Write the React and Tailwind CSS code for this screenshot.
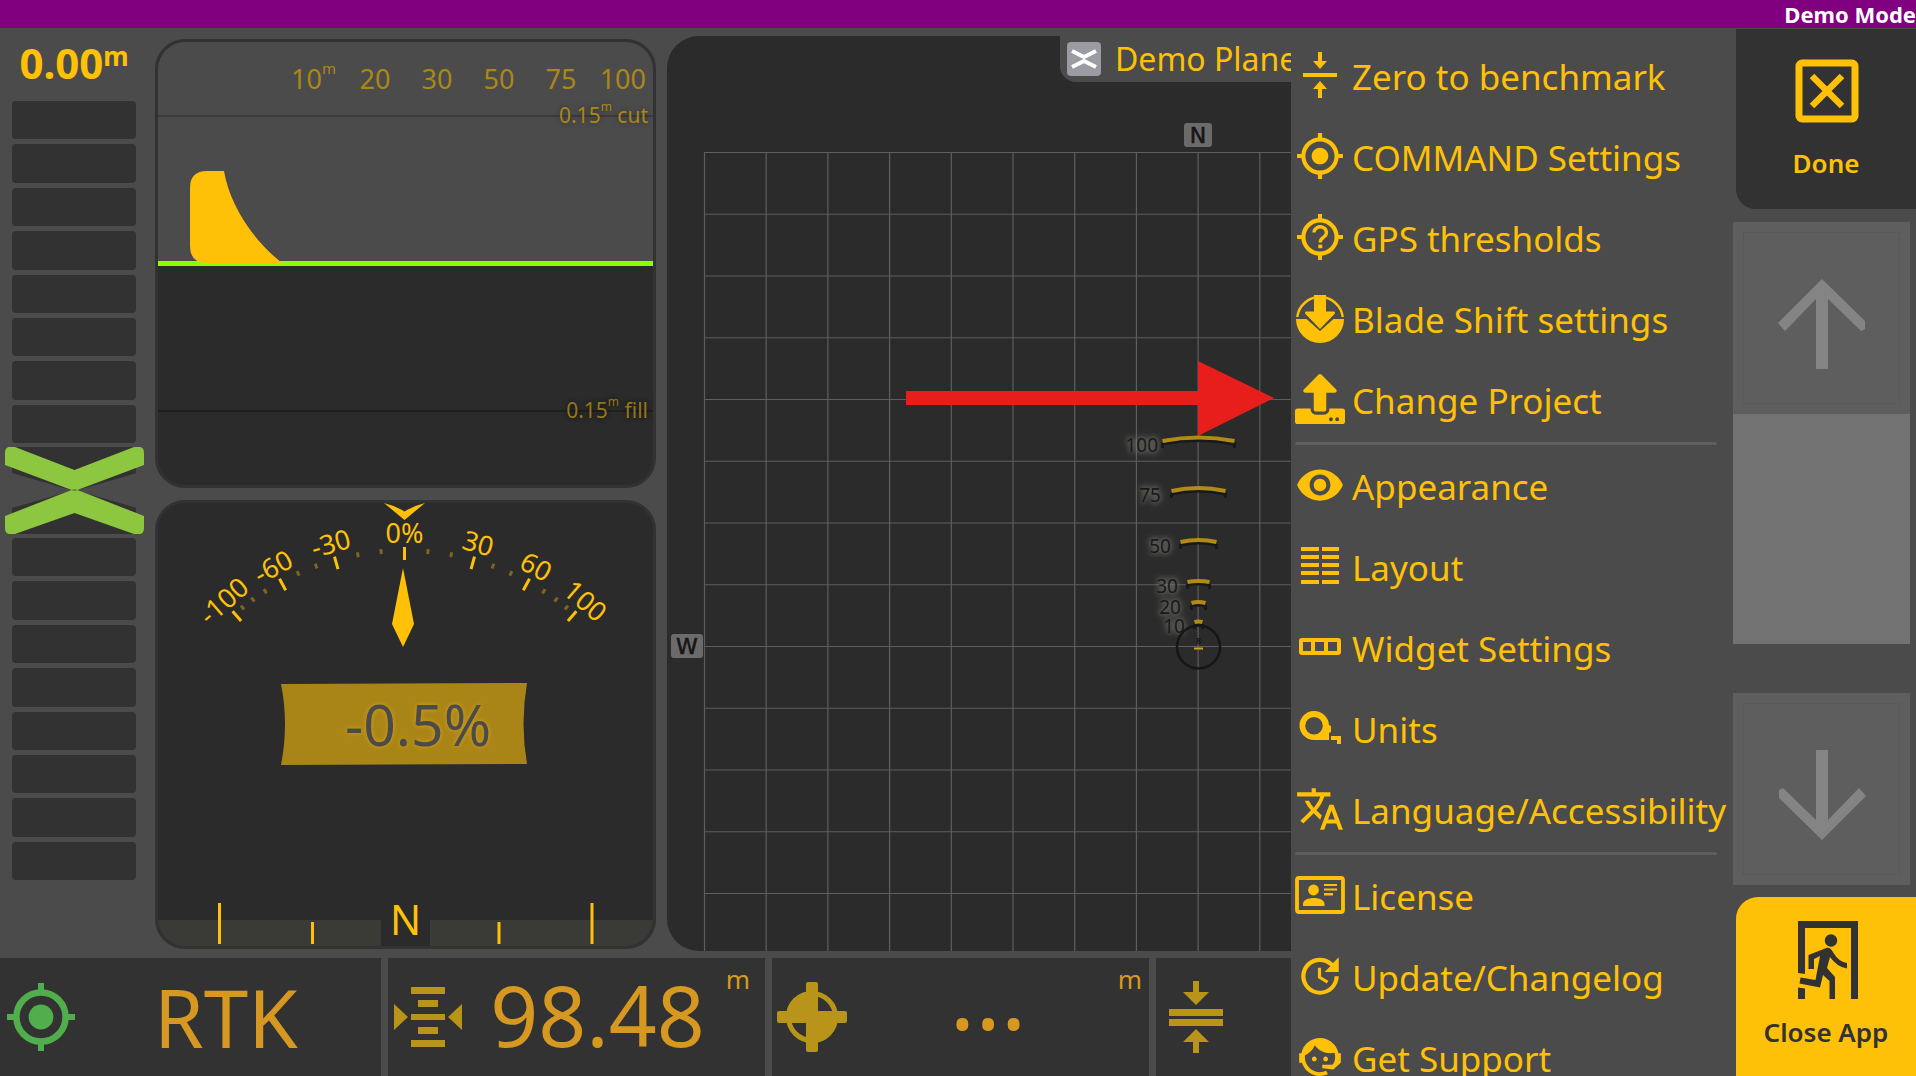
import React from "react";
import { MdGpsFixed, MdVisibility, MdTranslate, MdUpdate } from "react-icons/md";
import { FaUpload } from "react-icons/fa";

const Svg = ({ children, className = "size-[50px]", box = "0 0 50 50" }) => (
  <svg viewBox={box} className={className} fill="currentColor" aria-hidden="true">
    {children}
  </svg>
);

const ZeroIcon = ({ className }) => (
  <Svg className={className}>
    <path d="M23 2h4v9h5l-7 8-7-8h5zM8 23h34v4H8zM25 31l7 8h-5v9h-4v-9h-5z" />
  </Svg>
);

const GpsQuestionIcon = ({ className }) => (
  <Svg className={className}>
    <circle cx="25" cy="25" r="16.6" fill="none" stroke="currentColor" strokeWidth="4.2" />
    <path d="M23 2h4v6h-4zM23 42h4v6h-4zM2 23h6v4H2zM42 23h6v4h-6z" />
    <path
      d="M19 20.5a6.2 5.6 0 1 1 9.6 4.6C26.4 26.6 25.2 27.6 25.2 30.5"
      fill="none"
      stroke="currentColor"
      strokeWidth="3.4"
    />
    <rect x="23.3" y="32.6" width="4" height="3.6" />
  </Svg>
);

const BladeShiftIcon = ({ className }) => (
  <Svg className={className}>
    <path d="M2.2 24a23 23 0 0 1 45.6 0" fill="none" stroke="currentColor" strokeWidth="2.4" />
    <path d="M1 26h10.5L25 38l13.5-12H49a24 24 0 0 1-48 0z" />
    <path d="M19 2h12v16.5h7.5q2.5.5 1 2.5L25 36 10.5 21q-1.5-2 1-2.5H19z" />
  </Svg>
);

const LayoutIcon = ({ className }) => (
  <Svg className={className}>
    {[6, 14, 22, 30, 39].map((y) => (
      <path key={y} d={`M6 ${y}h18v4H6zM27 ${y}h17v4H27z`} />
    ))}
  </Svg>
);

const WidgetIcon = ({ className }) => (
  <Svg className={className}>
    <path
      fillRule="evenodd"
      d="M7 16h36a3 3 0 0 1 3 3v11a3 3 0 0 1-3 3H7a3 3 0 0 1-3-3V19a3 3 0 0 1 3-3zM8 20v9h8v-9zM20 20v9h9v-9zM33 20v9h9v-9z"
    />
  </Svg>
);

const TapeIcon = ({ className }) => (
  <Svg className={className}>
    <path
      fillRule="evenodd"
      d="M19 8a15 15 0 0 1 15 14l2 1v6l-2 1v7H19A14.5 14.5 0 0 1 19 8zM19 14a8.8 8.8 0 1 0 0 17.6A8.8 8.8 0 0 0 19 14z"
    />
    <path d="M36 33h10v8h-4v-4h-6z" />
  </Svg>
);

const LicenseIcon = ({ className }) => (
  <Svg className={className}>
    <rect x="2" y="8" width="46" height="34" rx="2" fill="none" stroke="currentColor" strokeWidth="3.8" />
    <circle cx="18.5" cy="20" r="5.4" />
    <path d="M8 36v-2c0-8 21.5-8 21.5 0v2zM29 14h13v2H29zM29 18.5h13v2H29zM29 23h9v2.5h-9z" />
  </Svg>
);

const SupportIcon = ({ className }) => (
  <Svg className={className} box="0 0 24 24">
    <path d="M18.72 14.76C19.07 13.91 19.26 13 19.26 12C19.26 11.28 19.15 10.59 18.96 9.95C18.31 10.1 17.63 10.18 16.92 10.18C13.86 10.18 11.15 8.67 9.5 6.34C8.61 8.5 6.91 10.26 4.77 11.22C4.73 11.47 4.73 11.74 4.73 12A7.27 7.27 0 0 0 12 19.27C13.05 19.27 14.06 19.04 14.97 18.63C15.54 19.72 15.8 20.26 15.78 20.26C14.14 20.81 12.87 21.08 12 21.08C9.58 21.08 7.27 20.13 5.57 18.42C4.53 17.38 3.76 16.11 3.33 14.73H2V10.18H3.09C3.93 6.04 7.6 2.92 12 2.92C14.4 2.92 16.71 3.87 18.42 5.58C19.69 6.84 20.54 8.45 20.89 10.18H22V14.73H21.94L18.38 18L13.08 17.4V15.73H17.91L18.72 14.76M9.27 11.77C9.9 11.77 10.4 12.28 10.4 12.91C10.4 13.54 9.9 14.04 9.27 14.04C8.64 14.04 8.13 13.54 8.13 12.91C8.13 12.28 8.64 11.77 9.27 11.77M14.72 11.77C15.35 11.77 15.85 12.28 15.85 12.91C15.85 13.54 15.35 14.04 14.72 14.04C14.09 14.04 13.58 13.54 13.58 12.91A1.14 1.14 0 0 1 14.72 11.77Z" />
  </Svg>
);

const MENU = [
  [
    ["Zero to benchmark", ZeroIcon],
    ["COMMAND Settings", MdGpsFixed],
    ["GPS thresholds", GpsQuestionIcon],
    ["Blade Shift settings", BladeShiftIcon],
    ["Change Project", FaUpload],
  ],
  [
    ["Appearance", MdVisibility],
    ["Layout", LayoutIcon],
    ["Widget Settings", WidgetIcon],
    ["Units", TapeIcon],
    ["Language/Accessibility", MdTranslate],
  ],
  [
    ["License", LicenseIcon],
    ["Update/Changelog", MdUpdate],
    ["Get Support", SupportIcon],
  ],
];

function SettingsMenu() {
  return (
    <nav className="w-[442px] shrink-0 overflow-hidden bg-[#4b4b4b] pt-2 pl-1">
      {MENU.map((section, i) => (
        <React.Fragment key={i}>
          {i > 0 && <hr className="my-px mr-4 h-[3px] rounded-full border-0 bg-[#5f5f5d]" />}
          <ul>
            {section.map(([label, Icon]) => (
              <li key={label}>
                <button
                  type="button"
                  className="flex h-[81px] w-full items-center gap-[7px] text-left text-[35px] leading-none whitespace-nowrap text-[#ffc107]"
                >
                  <Icon className="mb-[3px] size-[50px] shrink-0" />
                  <span>{label}</span>
                </button>
              </li>
            ))}
          </ul>
        </React.Fragment>
      ))}
    </nav>
  );
}

const ScrollArrow = ({ down }) => (
  <svg viewBox="0 0 90 94" className="mt-3 h-[94px] w-[90px]" aria-hidden="true">
    <g transform={down ? "rotate(180 45 47)" : undefined}>
      <path d="M45 2 88 44v8l-4 2-33-32v70H39V22L8 54l-7-8z" fill="#848484" />
    </g>
  </svg>
);

function SideBar() {
  return (
    <aside className="flex w-[183px] shrink-0 flex-col bg-[#4b4b4b]">
      <button
        type="button"
        className="mt-px ml-[3px] flex h-[180px] flex-col items-center rounded-bl-[20px] bg-[#323232] pt-[30px] text-[#ffc107]"
      >
        <Svg box="0 0 64 64" className="ml-[2px] size-16">
          <rect x="4" y="4" width="56" height="56" rx="3" fill="none" stroke="currentColor" strokeWidth="7" />
          <path d="m17 17 30 30M47 17 17 47" stroke="currentColor" strokeWidth="6.5" />
        </Svg>
        <span className="mt-[22px] text-[26px] leading-9 font-semibold">Done</span>
      </button>
      <div className="mt-[13px] mr-[6px] flex min-h-0 flex-1 flex-col">
        <button
          type="button"
          aria-label="Scroll up"
          className="flex flex-[192] items-center justify-center bg-[#5e5e5e] outline-1 -outline-offset-[11px] outline-[#57554f] outline-dotted"
        >
          <ScrollArrow />
        </button>
        <div className="flex-[230] bg-[#727272]" />
        <div className="flex-[49]" />
        <button
          type="button"
          aria-label="Scroll down"
          className="flex flex-[192] items-center justify-center bg-[#5e5e5e] outline-1 -outline-offset-[11px] outline-[#57554f] outline-dotted"
        >
          <ScrollArrow down />
        </button>
      </div>
      <button
        type="button"
        className="mt-3 ml-[3px] flex h-[179px] flex-col items-center rounded-tl-[22px] bg-[#ffc107] pt-6 text-[#323232]"
      >
        <Svg box="0 0 60 78" className="ml-[4px] h-[78px] w-[60px]">
          <path d="M0 0h60v78h-7V7H7v46l-7-1zM0 66.5l7 1V78H0z" />
          <circle cx="33" cy="19.5" r="6.2" />
          <path d="M27 27.5 10.5 34v14H16v-10l6-3-4.5 24-15-2.500-1 6L22 66.5 25 54l6.500 6v18H37V56l-8-9 3-11q7 10 17 11.500V42q-8-1-13.500-10Q32 25 27 27.500z" />
        </Svg>
        <span className="mt-[15px] text-[26px] leading-9 font-semibold">Close App</span>
      </button>
    </aside>
  );
}

const Bars = () => (
  <div className="ml-3 flex h-[342px] w-[124px] flex-col gap-[5px]">
    {Array.from({ length: 8 }, (_, i) => (
      <div key={i} className="flex-1 rounded-[4px] bg-[#323232]" />
    ))}
  </div>
);

function HeightGauge() {
  return (
    <section className="flex w-[155px] shrink-0 flex-col">
      <div className="mt-2 flex h-14 justify-center pr-[7px] text-[#ffc107]">
        <div className="flex items-start text-[42px] leading-[54px] font-bold">
          0.00<span className="text-[26px] leading-[40px]">m</span>
        </div>
      </div>
      <div className="mt-[9px]">
        <Bars />
      </div>
      <svg viewBox="0 0 139 87" className="my-1 ml-[5px] h-[87px] w-[139px]" aria-hidden="true">
        <path d="M7 0h124v87H7z" fill="#323232" />
        <path d="M0 24 69.5 44 139 24V63L69.5 43 0 63z" fill="#4b4b4b" />
        <path
          d="M0 6Q0-2 10 0L69.5 23 129 0q10-2 10 6v12L75 42q-5.500 3-11 0L0 18zM0 81q0 8 10 6L69.5 66 129 87q10 2 10-6V69L75 44q-5.500-3-11 0L0 69z"
          fill="#8dc63f"
        />
      </svg>
      <Bars />
    </section>
  );
}

function ProfileView() {
  return (
    <section className="h-[449px] overflow-hidden rounded-[30px] border-[3px] border-[#323232] bg-[#2b2b2b]">
      <svg className="h-full w-full" aria-label="Blade profile">
        <g transform="translate(-158 -42)">
          <rect x="158" y="42" width="100%" height="219" fill="#4b4b4b" />
          <path d="M158 116H660" stroke="#3a3a3a" strokeWidth="2" />
          <path d="M158 411H660" stroke="#1c1c1c" strokeWidth="1.5" />
          <path d="M158 263.5H660" stroke="#8fff00" strokeWidth="5" />
          <path d="M207 171h17c5 30 25 66 58 92h-75q-17 0-17-17v-58q0-17 17-17z" fill="#ffc107" />
          <g fill="#ab8717" fontSize="27">
            <text x="291" y="89">10<tspan dy="-15" fontSize="15">m</tspan></text>
            <text x="375" y="89" textAnchor="middle">20</text>
            <text x="437" y="89" textAnchor="middle">30</text>
            <text x="499" y="89" textAnchor="middle">50</text>
            <text x="561" y="89" textAnchor="middle">75</text>
            <text x="646" y="89" textAnchor="end">100</text>
          </g>
          <g fill="#ab8717" fontSize="21" textAnchor="end">
            <text x="648" y="123" className="[text-shadow:0_0_5px_#333]">
              0.15<tspan dy="-12" fontSize="12">m</tspan><tspan dy="12"> cut</tspan>
            </text>
            <text x="648" y="418" fill="#94761d" className="[text-shadow:0_0_5px_#111]">
              0.15<tspan dy="-12" fontSize="12">m</tspan><tspan dy="12"> fill</tspan>
            </text>
          </g>
        </g>
      </svg>
    </section>
  );
}

const MAJOR = [
  [-41, "-100"],
  [-28.5, "-60"],
  [-15.5, "-30"],
  [0, "0%"],
  [15.5, "30"],
  [28.5, "60"],
  [41, "100"],
];
const MINOR = [5.2, 10.4, 20, 24.3, 32.6, 35.9, 38.8].flatMap((a) => [a, -a]);

function SlopeView() {
  return (
    <section className="h-[449px] overflow-hidden rounded-[30px] border-[3px] border-[#323232] bg-[#2b2b2b]">
      <svg className="h-full w-full" aria-label="Blade slope">
        <g transform="translate(-158 -503)">
          <g transform="translate(404.5 809)" stroke="#ffc107" strokeWidth="3">
            {MAJOR.map(([a, label]) => (
              <g key={a} transform={`rotate(${a})`}>
                <path d="M0-262V-249" />
                <text y="-266" textAnchor="middle" fontSize="27" fill="#ffc107" stroke="none">
                  {label}
                </text>
              </g>
            ))}
            {MINOR.map((a) => (
              <path key={a} d="M0-261V-256" transform={`rotate(${a})`} stroke="#7d6520" />
            ))}
          </g>
          <path d="M384 503q12 3 20.5 8.500Q413 506 425 503L404.500 520z" fill="#ffc107" />
          <path d="M403 568l11 56-11 23-11-23z" fill="#ffc107" />
          <path d="M281 684 527 683Q520 724 527 764L281 765Q289 724 281 684z" fill="#a98517" />
          <text
            x="418"
            y="746"
            textAnchor="middle"
            fontSize="57"
            fill="#4b4b4b"
            className="[text-shadow:0_0_5px_#d6a21a]"
          >
            -0.5%
          </text>
          <path d="M158 920H381V946H158zM430 920H660V946H430z" fill="#3a3a37" />
          <path d="M381 920h49v26h-49z" fill="#2b2b2b" />
          <path d="M219.500 903v41M592 903v41M312.500 922v22M499 922v22" stroke="#ffc107" strokeWidth="3" />
          <text x="405.5" y="935" textAnchor="middle" fontSize="41" fill="#ffc107">
            N
          </text>
        </g>
      </svg>
    </section>
  );
}

const RANGES = [
  { label: "100", half: 36, y: 441, rise: 7, x: 1158, ty: 452 },
  { label: "75", half: 27, y: 491, rise: 6, x: 1161, ty: 502 },
  { label: "50", half: 18, y: 542, rise: 4, x: 1171, ty: 553 },
  { label: "30", half: 11, y: 582, rise: 2, x: 1178, ty: 593 },
  { label: "20", half: 7, y: 603, rise: 2, x: 1181, ty: 614 },
  { label: "10", half: 4, y: 622, rise: 1, x: 1185, ty: 633 },
];
const COLS = Array.from({ length: 11 }, (_, i) => 704.5 + i * 61.7);
const ROWS = Array.from({ length: 13 }, (_, i) => 152.5 + i * 61.75);

const Compass = ({ x, y, w, children }) => (
  <g>
    <rect x={x} y={y} width={w} height="24" rx="3" fill="#6b6b6b" />
    <text
      x={x + w / 2}
      y={y + 20}
      textAnchor="middle"
      fontSize="22"
      fill="#161616"
      stroke="#161616"
      strokeWidth="0.6"
      className="font-['DejaVu_Sans',sans-serif]"
    >
      {children}
    </text>
  </g>
);

function PlanView() {
  return (
    <section className="relative mt-2 mb-[7px] ml-[11px] min-w-0 flex-1 overflow-hidden rounded-l-[32px] bg-[#2b2b2b]">
      <svg className="h-full w-full" aria-label="Plan view">
        <g transform="translate(-667 -36)">
          <g stroke="#5e5e5e" strokeWidth="1.2">
            {COLS.map((x) => (
              <path key={x} d={`M${x} 152V952`} />
            ))}
            {ROWS.map((y) => (
              <path key={y} d={`M704 ${y}H1400`} />
            ))}
          </g>
          <Compass x={1184} y={123} w={28}>N</Compass>
          <Compass x={671} y={634} w={32}>W</Compass>
          <path d="M906 391h292v-30l76 37-76 38v-31H906z" fill="#e81e1c" />
          {RANGES.map(({ label, half, y, rise, x, ty }) => (
            <g key={label}>
              <text
                x={x}
                y={ty}
                textAnchor="end"
                fontSize="19"
                fill="#191919"
                className="[text-shadow:0_0_8px_#8a8a80,0_0_5px_#77776c]"
              >
                {label}
              </text>
              <path
                d={`M${1198.5 - half} ${y + 7}v-4q${half} ${-rise} ${half * 2} 0v4`}
                fill="none"
                stroke="#191919"
                strokeWidth="3"
              />
              <path
                d={`M${1198.5 - half} ${y}q${half} ${-rise} ${half * 2} 0`}
                fill="none"
                stroke="#b08b18"
                strokeWidth="4"
              />
            </g>
          ))}
          <circle cx="1198.5" cy="647" r="21.5" fill="none" stroke="#161616" strokeWidth="2.5" />
          <text x="1198.5" y="644" textAnchor="middle" fontSize="9" fontWeight="700" fill="#161616">
            8
          </text>
          <path d="M1194 648.5h9" stroke="#d1a016" strokeWidth="2" />
        </g>
      </svg>
      <header className="absolute top-0 left-[393px] flex h-[46px] w-[400px] items-center gap-[14px] rounded-bl-[16px] bg-[#4b4b4b] pl-[7px] text-[32px] leading-none whitespace-nowrap text-[#ffc107]">
        <svg viewBox="0 0 34 34" className="size-[34px]" aria-hidden="true">
          <rect width="34" height="34" rx="4" fill="#9b9ba3" />
          <path d="m5 9 12 6 12-6M5 25l12-6 12 6" fill="none" stroke="#fff" strokeWidth="4" />
        </svg>
        <h1>Demo Plane</h1>
      </header>
    </section>
  );
}

const Tile = ({ icon, value, unit, className, valueClass = "text-[82px]", unitClass = "right-[15px]" }) => (
  <div className={`relative flex h-full shrink-0 items-center bg-[#323232] ${className}`}>
    {icon}
    <div className={`flex-1 text-center leading-none text-[#d69820] ${valueClass}`}>{value}</div>
    {unit && <span className={`absolute top-[7px] text-[26px] leading-7 text-[#d69820] ${unitClass}`}>{unit}</span>}
  </div>
);

function StatusBar() {
  return (
    <footer className="flex h-[118px] shrink-0 gap-[7px] overflow-hidden">
      <Tile
        className="w-[381px] pl-[7px]"
        value="RTK"
        valueClass="pr-1 text-[80px]"
        icon={
          <svg viewBox="0 0 68 68" className="size-[68px] shrink-0 text-[#50ae4c]" fill="currentColor" aria-hidden="true">
            <circle cx="34" cy="34" r="24.6" fill="none" stroke="currentColor" strokeWidth="6.5" />
            <circle cx="34" cy="34" r="12.4" />
            <path d="M31 0h6v8h-6zM31 60h6v8h-6zM0 31h8v6H0zM60 31h8v6h-8z" />
          </svg>
        }
      />
      <Tile
        className="w-[377px] pl-[6px]"
        value="98.48"
        valueClass="pr-8 pb-1 text-[84px]"
        unit="m"
        icon={
          <svg viewBox="0 0 68 68" className="size-[68px] shrink-0" fill="#b89518" aria-hidden="true">
            <path d="M17 4h34v7H17zM24 17h20v7H24zM17 31h34v6H17zM24 44h20v7H24zM17 57h34v7H17zM0 21l14 13L0 47zM68 21 54 34l14 13z" />
          </svg>
        }
      />
      <Tile
        className="w-[377px] pl-[5px]"
        value="..."
        valueClass="pr-5 pb-12 text-[96px]"
        unit="m"
        unitClass="right-[7px]"
        icon={
          <svg viewBox="0 0 70 70" className="size-[70px] shrink-0" fill="#b89518" aria-hidden="true">
            <circle cx="35" cy="35" r="23.5" fill="none" stroke="#b89518" strokeWidth="5" />
            <path d="M35 9v26H9A26 26 0 0 1 35 9zM35 61V35h26A26 26 0 0 1 35 61z" />
            <rect x="29" width="12" height="70" rx="2" />
            <rect y="29" width="70" height="12" rx="2" />
          </svg>
        }
      />
      <Tile
        className="w-[377px] pl-[13px]"
        value=""
        icon={
          <svg viewBox="0 0 54 72" className="h-[72px] w-[54px] shrink-0" fill="#b89518" aria-hidden="true">
            <path d="M24 0h6v11h10L27 24 14 11h10zM0 28h54v7H0zM0 38h54v7H0zM27 48l13 13H30v11h-6V61H14z" />
          </svg>
        }
      />
    </footer>
  );
}

export default function App() {
  return (
    <div className="flex h-screen flex-col overflow-hidden bg-[#4b4b4b] font-['Noto_Sans',sans-serif]">
      <div className="flex h-7 shrink-0 items-center justify-end overflow-hidden bg-[#800080] text-[22px] leading-none font-bold whitespace-nowrap text-white">
        Demo Mode
      </div>
      <div className="flex min-h-0 flex-1">
        <main className="flex min-w-0 flex-1 flex-col">
          <div className="flex min-h-0 flex-1">
            <HeightGauge />
            <div className="flex w-[501px] shrink-0 flex-col gap-3 pt-[11px]">
              <ProfileView />
              <SlopeView />
            </div>
            <PlanView />
          </div>
          <StatusBar />
        </main>
        <SettingsMenu />
        <SideBar />
      </div>
    </div>
  );
}
